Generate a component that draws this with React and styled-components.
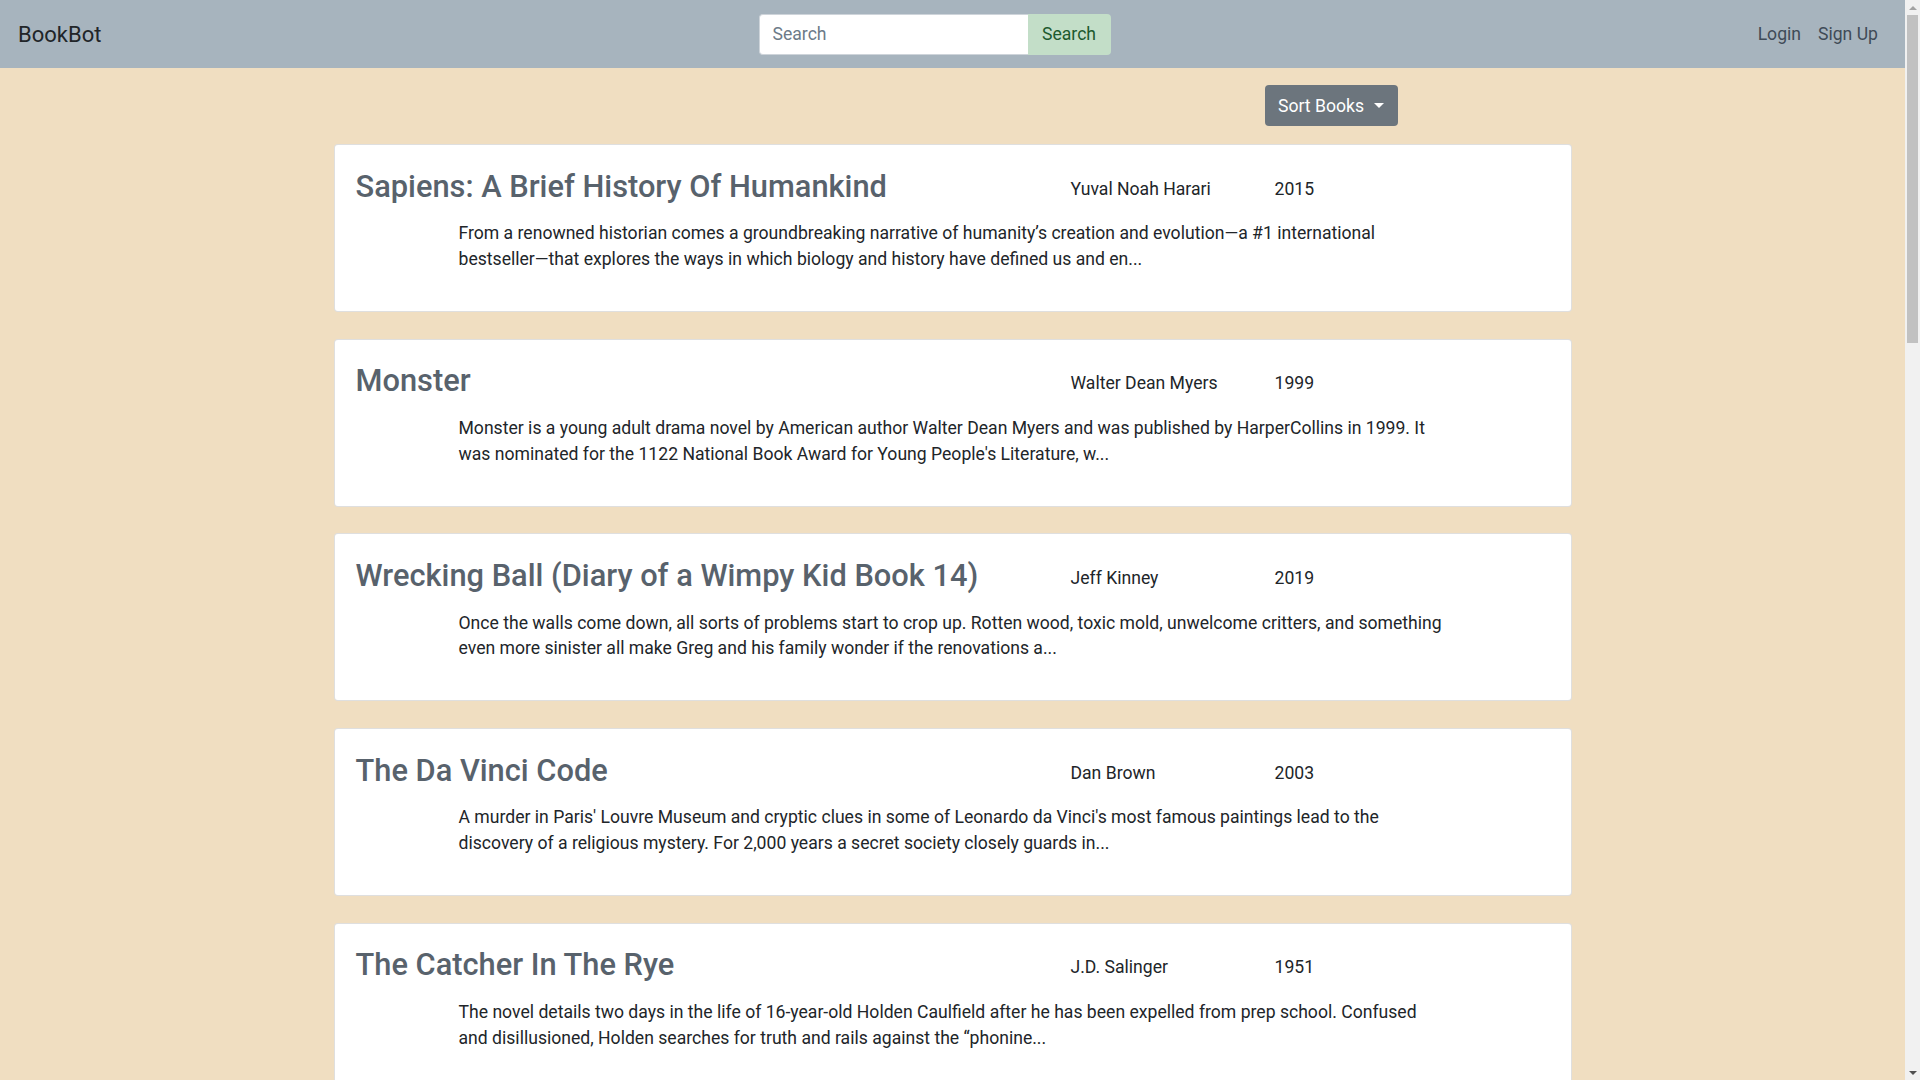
import React from "react";
import styled, { createGlobalStyle } from "styled-components";

const GlobalStyle = createGlobalStyle`
  html, body {
    margin: 0;
    padding: 0;
  }
  body {
    background: #f0dec1;
    font-family: Roboto, "Liberation Sans", Arial, sans-serif;
    font-size: 17.6px;
    line-height: 1.5;
    color: #212529;
  }
  * {
    box-sizing: border-box;
  }
`;

// the window: page on the left, scrollbar strip on the right
const Frame = styled.div`
  display: flex;
  height: 100vh;
  overflow: hidden;
`;

const Page = styled.div`
  flex: 1;
  min-width: 0;
  overflow: hidden;
`;

const ScrollTrack = styled.div`
  width: 15px;
  flex-shrink: 0;
  background: #f1f1f1;
  display: flex;
  flex-direction: column;
  align-items: center;
`;

const ScrollArrow = styled.div`
  height: 15px;
  width: 15px;
  display: flex;
  align-items: center;
  justify-content: center;

  &::before {
    content: "";
    border-left: 4px solid transparent;
    border-right: 4px solid transparent;
    ${(p) =>
      p.down
        ? "border-top: 4px solid #505050;"
        : "border-bottom: 4px solid #a3a3a3;"}
  }
`;

const ScrollThumb = styled.div`
  width: 11px;
  height: 328px;
  background: #c1c1c1;
`;

const ScrollSpacer = styled.div`
  flex: 1;
`;

const Navbar = styled.nav`
  height: 68px;
  background: #a7b4be;
  display: flex;
  align-items: center;
  justify-content: space-between;
  padding: 0 27px 0 18px;
`;

const Brand = styled.a`
  font-size: 22px;
  color: #212529;
  text-decoration: none;
  line-height: 1.5;
`;

const SearchForm = styled.form`
  display: flex;
  margin-left: 10px;
`;

const SearchInput = styled.input`
  width: 269px;
  height: 41px;
  border: 1px solid #ced4da;
  border-right: none;
  border-radius: 4px 0 0 4px;
  padding: 0 13px;
  font-family: inherit;
  font-size: 17.6px;
  color: #495057;
  background: #fff;
  outline: none;

  &::placeholder {
    color: #6c7a88;
  }
`;

const SearchButton = styled.button`
  width: 83px;
  height: 41px;
  border: none;
  border-radius: 0 4px 4px 0;
  background: #c3dec8;
  color: #1d5a2e;
  font-family: inherit;
  font-size: 17.6px;
  cursor: pointer;
`;

const NavLinks = styled.div`
  display: flex;
  gap: 17px;
`;

const NavLink = styled.a`
  color: #3f4b57;
  text-decoration: none;
  font-size: 17.6px;
`;

const Main = styled.main`
  width: 1238px;
  margin: 0 auto;
  padding: 17px 0 30px;
`;

const SortRow = styled.div`
  display: flex;
  justify-content: flex-end;
  padding-right: 174px;
  margin-bottom: 18px;
`;

const SortButton = styled.button`
  width: 133px;
  height: 41px;
  background: #6c757d;
  color: #fff;
  border: none;
  border-radius: 4px;
  font-family: inherit;
  font-size: 17.6px;
  display: flex;
  align-items: center;
  justify-content: center;
  gap: 10px;
  cursor: pointer;

  &::after {
    content: "";
    border-top: 5px solid #fff;
    border-left: 5px solid transparent;
    border-right: 5px solid transparent;
  }
`;

const BookList = styled.div`
  display: flex;
  flex-direction: column;
  gap: 26.7px;
`;

const Card = styled.div`
  background: #fff;
  border: 1px solid rgba(0, 0, 0, 0.125);
  border-radius: 4px;
  padding: 21px 20px 25px 21px;
  min-height: 168px;
`;

const HeadRow = styled.div`
  display: grid;
  grid-template-columns: 715px 204px 1fr;
  align-items: center;
`;

const Title = styled.h3`
  margin: 2.5px 0 6.3px;
  font-size: 30.8px;
  font-weight: 500;
  line-height: 1.2;
  color: #58626c;
`;

const Meta = styled.p`
  margin: 0;
  font-size: 17.6px;
  color: #212529;
`;

const Description = styled.p`
  margin: 9.5px 0 0 103px;
  width: 990px;
  font-size: 17.6px;
  line-height: 25.7px;
  color: #212529;
`;

const books = [
  {
    title: "Sapiens: A Brief History Of Humankind",
    author: "Yuval Noah Harari",
    year: 2015,
    text: "From a renowned historian comes a groundbreaking narrative of humanity\u2019s creation and evolution\u2014a #1 international bestseller\u2014that explores the ways in which biology and history have defined us and en...",
  },
  {
    title: "Monster",
    author: "Walter Dean Myers",
    year: 1999,
    text: "Monster is a young adult drama novel by American author Walter Dean Myers and was published by HarperCollins in 1999. It was nominated for the 1122 National Book Award for Young People's Literature, w...",
  },
  {
    title: "Wrecking Ball (Diary of a Wimpy Kid Book 14)",
    author: "Jeff Kinney",
    year: 2019,
    text: "Once the walls come down, all sorts of problems start to crop up. Rotten wood, toxic mold, unwelcome critters, and something even more sinister all make Greg and his family wonder if the renovations a...",
  },
  {
    title: "The Da Vinci Code",
    author: "Dan Brown",
    year: 2003,
    text: "A murder in Paris' Louvre Museum and cryptic clues in some of Leonardo da Vinci's most famous paintings lead to the discovery of a religious mystery. For 2,000 years a secret society closely guards in...",
  },
  {
    title: "The Catcher In The Rye",
    author: "J.D. Salinger",
    year: 1951,
    text: "The novel details two days in the life of 16-year-old Holden Caulfield after he has been expelled from prep school. Confused and disillusioned, Holden searches for truth and rails against the \u201Cphonine...",
  },
  {
    title: "To Kill A Mockingbird",
    author: "Harper Lee",
    year: 1960,
    text: "The unforgettable novel of a childhood in a sleepy Southern town and the crisis of conscience that rocked it. Compassionate, dramatic, and deeply moving, To Kill A Mockingbird takes readers to the ro...",
  },
  {
    title: "1984",
    author: "George Orwell",
    year: 1949,
    text: "Among the seminal texts of the 20th century, Nineteen Eighty-Four is a rare work that grows more haunting as its futuristic purgatory becomes more real. Published in 1949, the book offers political sa...",
  },
  {
    title: "The Great Gatsby",
    author: "F. Scott Fitzgerald",
    year: 1925,
    text: "The Great Gatsby, F. Scott Fitzgerald's third book, stands as the supreme achievement of his career. This exemplary novel of the Jazz Age has been acclaimed by generations of readers. The story of the...",
  },
  {
    title: "The Hobbit",
    author: "J.R.R. Tolkien",
    year: 1937,
    text: "Bilbo Baggins is a hobbit who enjoys a comfortable, unambitious life, rarely traveling any farther than his pantry or cellar. But his contentment is disturbed when the wizard Gandalf and a company of...",
  },
  {
    title: "Educated",
    author: "Tara Westover",
    year: 2018,
    text: "Born to survivalists in the mountains of Idaho, Tara Westover was seventeen the first time she set foot in a classroom. Her family was so isolated from mainstream society that there was no one to ens...",
  },
  {
    title: "The Hunger Games",
    author: "Suzanne Collins",
    year: 2008,
    text: "In the ruins of a place once known as North America lies the nation of Panem, a shining Capitol surrounded by twelve outlying districts. The Capitol keeps the districts in line by forcing them all t...",
  },
  {
    title: "Becoming",
    author: "Michelle Obama",
    year: 2018,
    text: "In a life filled with meaning and accomplishment, Michelle Obama has emerged as one of the most iconic and compelling women of our era. As First Lady of the United States of America, she helped crea...",
  },
  {
    title: "The Alchemist",
    author: "Paulo Coelho",
    year: 1988,
    text: "Paulo Coelho's masterpiece tells the mystical story of Santiago, an Andalusian shepherd boy who yearns to travel in search of a worldly treasure. His quest will lead him to riches far different\u2014and fa...",
  },
  {
    title: "Pride And Prejudice",
    author: "Jane Austen",
    year: 1813,
    text: "Since its immediate success in 1813, Pride and Prejudice has remained one of the most popular novels in the English language. Jane Austen called this brilliant work her own darling child and its viv...",
  },
  {
    title: "Wonder",
    author: "R.J. Palacio",
    year: 2012,
    text: "August Pullman was born with a facial difference that, up until now, has prevented him from going to a mainstream school. Starting 5th grade at Beecher Prep, he wants nothing more than to be treated...",
  },
  {
    title: "The Road",
    author: "Cormac McCarthy",
    year: 2006,
    text: "A father and his son walk alone through burned America. Nothing moves in the ravaged landscape save the ash on the wind. It is cold enough to crack stones, and when the snow falls it is gray. The sky...",
  },
  {
    title: "Dune",
    author: "Frank Herbert",
    year: 1965,
    text: "Set on the desert planet Arrakis, Dune is the story of the boy Paul Atreides, heir to a noble family tasked with ruling an inhospitable world where the only thing of value is the spice melange, a dru...",
  },
];

function BookCard({ book }) {
  return (
    <Card>
      <HeadRow>
        <Title>{book.title}</Title>
        <Meta>{book.author}</Meta>
        <Meta>{book.year}</Meta>
      </HeadRow>
      <Description>{book.text}</Description>
    </Card>
  );
}

function App() {
  return (
    <>
      <GlobalStyle />
      <Frame>
        <Page>
          <Navbar>
            <Brand href="#">BookBot</Brand>
            <SearchForm onSubmit={(e) => e.preventDefault()}>
              <SearchInput type="search" placeholder="Search" />
              <SearchButton type="submit">Search</SearchButton>
            </SearchForm>
            <NavLinks>
              <NavLink href="#">Login</NavLink>
              <NavLink href="#">Sign Up</NavLink>
            </NavLinks>
          </Navbar>
          <Main>
            <SortRow>
              <SortButton>Sort Books</SortButton>
            </SortRow>
            <BookList>
              {books.map((book) => (
                <BookCard key={book.title} book={book} />
              ))}
            </BookList>
          </Main>
        </Page>
        <ScrollTrack>
          <ScrollArrow />
          <ScrollThumb />
          <ScrollSpacer />
          <ScrollArrow down />
        </ScrollTrack>
      </Frame>
    </>
  );
}

export default App;
